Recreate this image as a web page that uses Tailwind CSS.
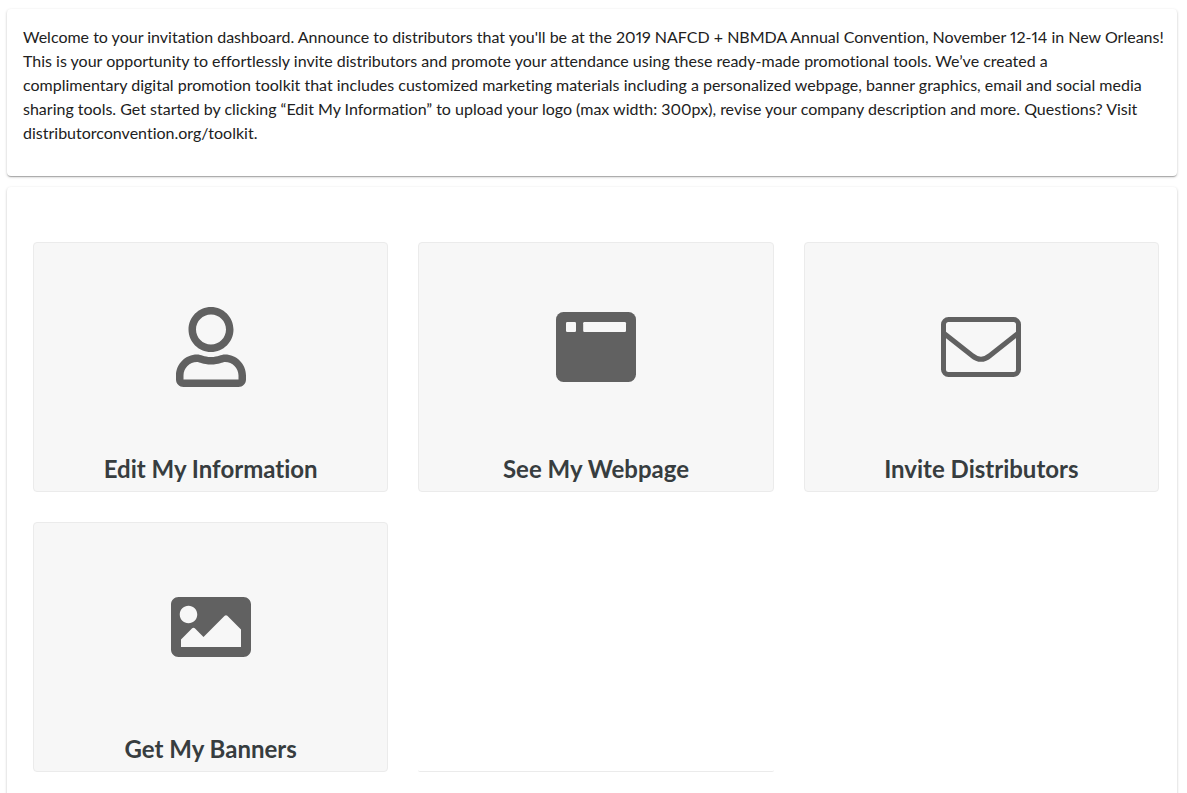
<!DOCTYPE html>
<html lang="en">
  <head>
    <meta charset="UTF-8" />
    <meta name="viewport" content="width=device-width, initial-scale=1.0" />
    <title>Invitation Dashboard</title>
    <!-- Tailwind -->
    <script src="https://cdn.jsdelivr.net/npm/@tailwindcss/browser@4"></script>
  </head>
  <body
    class="bg-white font-[Lato,'Open_Sans',sans-serif] text-[#212121] proportional-nums [font-variant-ligatures:none]"
  >
    <main class="flex flex-col gap-[11px] pt-[9px] pr-[10px] pl-[7px]">
      <!-- Intro start -->
      <section
        class="rounded bg-white pt-4 pr-1 pb-[31px] pl-4 shadow-[0_1px_3px_0_rgba(0,0,0,0.2),0_1px_1px_0_rgba(0,0,0,0.14),0_2px_1px_-1px_rgba(0,0,0,0.12)]"
      >
        <p class="text-base leading-6">
          Welcome to your invitation dashboard. Announce to distributors that
          you'll be at the 2019 NAFCD + NBMDA Annual Convention, November 12-14
          in New Orleans!<br />
          This is your opportunity to effortlessly invite distributors and
          promote your attendance using these ready-made promotional tools.
          We’ve created a<br />
          complimentary digital promotion toolkit that includes customized
          marketing materials including a personalized webpage, banner graphics,
          email and social media<br />
          sharing tools. Get started by clicking “Edit My Information” to upload
          your logo (max width: 300px), revise your company description and
          more. Questions? Visit<br />
          distributorconvention.org/toolkit.
        </p>
      </section>
      <!-- Intro end -->
      <!-- Tools start -->
      <section
        class="rounded bg-white pt-[55px] pr-[18px] pb-14 pl-[26px] shadow-[0_1px_3px_0_rgba(0,0,0,0.2),0_1px_1px_0_rgba(0,0,0,0.14),0_2px_1px_-1px_rgba(0,0,0,0.12)]"
      >
        <div class="grid grid-cols-3 gap-[30px]">
          <a
            href="#"
            class="flex h-[250px] flex-col rounded border border-[#ebebeb] bg-[#f7f7f7] pb-1 text-center"
          >
            <span class="flex flex-1 items-center justify-center text-[#616161]">
              <svg class="h-20" viewBox="0 0 448 512" fill="currentColor">
                <path
                  d="M313.6 304c-28.7 0-42.5 16-89.6 16-47.1 0-60.8-16-89.6-16C60.2 304 0 364.2 0 438.4V464c0 26.5 21.5 48 48 48h352c26.5 0 48-21.5 48-48v-25.6c0-74.2-60.2-134.4-134.4-134.4zM400 464H48v-25.6c0-47.6 38.8-86.4 86.4-86.4 14.6 0 38.3 16 89.6 16 51.7 0 74.9-16 89.6-16 47.6 0 86.4 38.8 86.4 86.4V464zM224 288c79.5 0 144-64.5 144-144S303.5 0 224 0 80 64.5 80 144s64.5 144 144 144zm0-240c52.9 0 96 43.1 96 96s-43.1 96-96 96-96-43.1-96-96 43.1-96 96-96z"
                />
              </svg>
            </span>
            <span class="text-2xl leading-9 font-bold text-[#373d3f]"
              >Edit My Information</span
            >
          </a>

          <a
            href="#"
            class="flex h-[250px] flex-col rounded border border-[#ebebeb] bg-[#f7f7f7] pb-1 text-center"
          >
            <span class="flex flex-1 items-center justify-center text-[#616161]">
              <svg class="w-20" viewBox="0 0 512 448" fill="currentColor">
                <rect width="512" height="448" rx="48" />
                <rect x="64" y="64" width="64" height="64" rx="8" fill="#f7f7f7" />
                <rect x="174" y="64" width="274" height="64" rx="8" fill="#f7f7f7" />
              </svg>
            </span>
            <span class="text-2xl leading-9 font-bold text-[#373d3f]"
              >See My Webpage</span
            >
          </a>

          <a
            href="#"
            class="flex h-[250px] flex-col rounded border border-[#ebebeb] bg-[#f7f7f7] pb-1 text-center"
          >
            <span class="flex flex-1 items-center justify-center text-[#616161]">
              <svg
                class="w-20"
                viewBox="0 0 80 60"
                fill="none"
                stroke="currentColor"
                stroke-width="5"
              >
                <rect x="2.5" y="2.5" width="75" height="55" rx="5" />
                <path d="M2.5 16L31 38.5Q40 46 49 38.5L77.5 16" />
              </svg>
            </span>
            <span class="text-2xl leading-9 font-bold text-[#373d3f]"
              >Invite Distributors</span
            >
          </a>

          <a
            href="#"
            class="flex h-[250px] flex-col rounded border border-[#ebebeb] bg-[#f7f7f7] pb-1 text-center"
          >
            <span class="flex flex-1 items-center justify-center text-[#616161]">
              <svg class="w-20" viewBox="0 64 512 384" fill="currentColor">
                <path
                  d="M464 448H48c-26.51 0-48-21.49-48-48V112c0-26.51 21.49-48 48-48h416c26.51 0 48 21.49 48 48v288c0 26.51-21.49 48-48 48zM112 120c-30.928 0-56 25.072-56 56s25.072 56 56 56 56-25.072 56-56-25.072-56-56-56zM64 384h384V272l-87.515-87.515c-4.686-4.686-12.284-4.686-16.971 0L208 320l-55.515-55.515c-4.686-4.686-12.284-4.686-16.971 0L64 336v48z"
                />
              </svg>
            </span>
            <span class="text-2xl leading-9 font-bold text-[#373d3f]"
              >Get My Banners</span
            >
          </a>

          <!-- Empty slot -->
          <div class="h-[250px] rounded-xs border-b border-[#ebebeb]"></div>
        </div>
      </section>
      <!-- Tools end -->
    </main>
  </body>
</html>
